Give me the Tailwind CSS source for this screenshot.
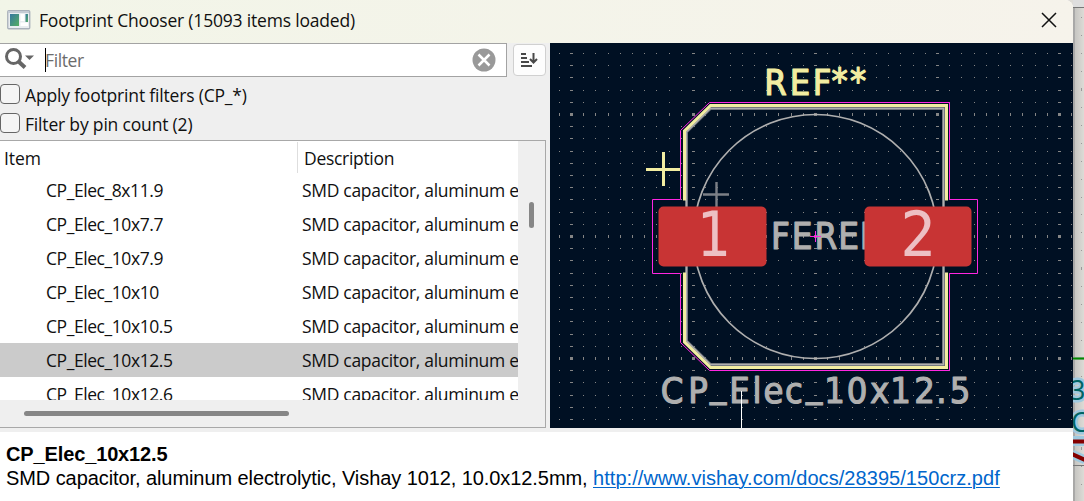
<!DOCTYPE html>
<html lang="en">
<head>
<meta charset="utf-8">
<title>Footprint Chooser</title>
<script src="https://cdn.jsdelivr.net/npm/@tailwindcss/browser@4"></script>
</head>
<body class="w-[1084px] h-[501px] overflow-hidden bg-[#dedcd7]">
<div class="flex w-[1084px] h-[501px] font-['Open_Sans',sans-serif] text-[17.5px] text-[#101010]">
  <div class="w-[1073px] h-[501px] shrink-0 flex flex-col overflow-hidden rounded-tr-lg bg-white">
    <header class="h-[43px] shrink-0 flex items-center pb-[3px] pl-[7px] pr-4 bg-gradient-to-r from-[#f2f5e8] to-[#f6f3eb]">
      <svg class="w-6 h-5 shrink-0" viewBox="0 0 24 20">
        <defs><linearGradient id="g" x1="0" y1="0" x2="1" y2="1"><stop offset="0" stop-color="#3577a0"/><stop offset="1" stop-color="#55ae62"/></linearGradient></defs>
        <rect x=".75" y=".75" width="22" height="18" rx="1" fill="#e9edf0" stroke="#a9b0ba" stroke-width="1.3"/>
        <path d="M1 2h21" stroke="#c4cbd4" stroke-width="2"/>
        <rect x="3" y="4" width="9" height="12" fill="url(#g)"/>
        <rect x="13.500" y="4" width="4" height="7" fill="#fff"/><rect x="18.500" y="4" width="2.500" height="8" fill="url(#g)"/><rect x="13.500" y="12.500" width="7.500" height="3.500" fill="#fff"/>
      </svg>
      <h1 class="ml-2 whitespace-nowrap -tracking-[0.19px]">Footprint Chooser (15093 items loaded)</h1>
      <svg class="ml-auto w-4 h-4" viewBox="0 0 16 16"><path d="M1 1l14 14M15 1L1 15" stroke="#111" stroke-width="1.500"/></svg>
    </header>
    <main class="flex h-[385px] shrink-0">
      <section class="w-[550px] h-[385px] shrink-0 bg-[#efefef] flex flex-col">
        <div class="flex h-[34px]">
          <div class="w-[507px] h-[34px] bg-white border border-l-0 border-[#a3a3a3] flex items-center">
            <svg class="ml-1 w-[32px] h-6 shrink-0 -mt-1" viewBox="0 0 32 24"><circle cx="9.500" cy="10.500" r="7" fill="none" stroke="#666" stroke-width="3"/><path d="M14 15l7 6.500" stroke="#666" stroke-width="4"/><path d="M21 9.500h9l-4.500 4.500z" fill="#666"/></svg>
            <div class="ml-[9px] h-6 border-l border-black flex items-center text-[#6c6c6c] -tracking-[0.4px]"><span class="-ml-px">Filter</span></div>
            <svg class="ml-auto mr-[10px] w-6 h-6 -mt-px" viewBox="0 0 24 24"><circle cx="12" cy="12" r="11.500" fill="#999"/><path d="M6.500 6.500l11 11M17.500 6.500l-11 11" stroke="#fff" stroke-width="2.500"/></svg>
          </div>
          <div class="ml-1.5 mt-px w-[33px] h-8 rounded border border-[#d0d0d0] bg-[#fdfdfd]">
            <svg class="w-[31px] h-[30px]" viewBox="0 0 31 30"><path d="M7 9h5M7 13h6M7 17h8M7 21h11" stroke="#484848" stroke-width="2"/><path d="M19.500 8v9M16 14l3.500 3.500L23 14" fill="none" stroke="#484848" stroke-width="2"/></svg>
          </div>
        </div>
        <div class="flex flex-col pt-1 h-[63px]">
          <label class="flex items-center h-[29px] gap-[5px]"><span class="w-5 h-5 -mt-1 rounded border border-[#666] bg-[#f5f5f5]"></span><span class="-tracking-[0.18px]">Apply footprint filters (CP_*)</span></label>
          <label class="flex items-center h-[29px] gap-[5px]"><span class="w-5 h-5 -mt-1 rounded border border-[#666] bg-[#f5f5f5]"></span><span class="-tracking-[0.18px]">Filter by pin count (2)</span></label>
        </div>
        <div class="w-[546px] h-[288px] border border-l-0 border-[#a8a8a8] flex flex-col">
          <div class="flex h-[260px] shrink-0">
            <div class="w-[518px] h-[259px] bg-white overflow-hidden whitespace-nowrap">
              <div class="flex h-[33px] pt-px"><div class="w-[298px] pl-1 pt-[3px] h-[31px] border-r border-[#dedede] -tracking-[0.1px]">Item</div><div class="pl-1.5 pt-[3px] -tracking-[0.3px]">Description</div></div>
              <div id="rows" class="-mt-px"></div>
            </div>
            <div class="flex-1 flex justify-center pt-[61px]"><div class="w-[5px] h-[26px] rounded-full bg-[#868686]"></div></div>
          </div>
          <div class="pl-6 pt-[10px]"><div class="w-[265px] h-[5px] rounded-full bg-[#868686]"></div></div>
        </div>
      </section>
      <svg class="w-[523px] h-[385px] shrink-0 bg-[#001023]" viewBox="550 43 523 385">
        <g id="grid" fill="#858585" shape-rendering="crispEdges"></g>
        <g fill="none">
          <path d="M710.500 108.500H943.500V364.500H710.500L686.500 341V132Z" stroke="#62676f" stroke-width="3"/>
          <path d="M710.500 108.500H943.500V364.500H710.500L686.500 341V132Z" stroke="#afafaf" stroke-width="1.500"/>
          <circle cx="815.500" cy="236.500" r="122" stroke="#afafaf" stroke-width="1.700"/>
          <path d="M703 194.500h26M716.500 182v26" stroke="#7c8087" stroke-width="2.400"/>
          <path d="M684.500 200.500V131L710.500 105.500H946.500V200.500M684.500 272.500V342L710.500 367.500H946.500V272.500" stroke="#f2eda1" stroke-width="3"/>
          <path d="M646 169.500h34M663.500 152v34" stroke="#f2eda1" stroke-width="3"/>
          <path d="M709.500 102.500H949.500V199.500H977.500V273.500H949.500V370.500H709.500L680.500 342.500V273.500H652.500V199.500H680.500V130.500Z" stroke="#ff26e2" stroke-width="1"/>
        </g>
        <g font-family="DejaVu Sans Condensed, DejaVu Sans" text-anchor="middle" stroke-linejoin="round">
          <text x="775.500 800 822 839.500 858" y="94.500 94.500 94.500 93 93" font-size="36" fill="#f2eda1" stroke="#f2eda1" stroke-width="1.200">REF**</text>
          <g fill="#afafaf" stroke="#afafaf" stroke-width="1.200">
            <text x="780.500 802 826 848.500 872" y="249" font-size="36.500">FEREN</text>
            <text x="672 698 718 739.500 757 773.500 794 814 834.500 857 879.500 900.500 924.500 941.500 960" y="403 403 397 403 403 403 403 397 403 403 403 403 403 403 403" font-size="36">CP_Elec_10x12.5</text>
          </g>
        </g>
        <path d="M810 236.500h11M815.500 231v11" stroke="#ff26e2"/>
        <path d="M741.500 391v37" stroke="#fff"/>
        <g fill="#c83434"><rect x="658.500" y="206.500" width="108" height="60" rx="5"/><rect x="864.500" y="206.500" width="107" height="60" rx="5"/></g>
        <g font-family="DejaVu Sans Mono" font-size="62" fill="#edc0c4" text-anchor="middle"><text transform="translate(713 256) scale(.9 1)">1</text><text transform="translate(918 256) scale(.95 1)">2</text></g>
      </svg>
    </main>
    <footer class="flex-1 border-t-4 border-[#efefef] bg-white pl-1.5 pt-[10px] font-['Liberation_Sans',sans-serif] text-[20px] leading-6 text-black whitespace-nowrap">
      <div class="font-bold -tracking-[0.13px]">CP_Elec_10x12.5</div>
      <div class="-tracking-[0.08px]">SMD capacitor, aluminum electrolytic, Vishay 1012, 10.0x12.5mm, <span class="tracking-[0.06px] text-[#0066cc] underline underline-offset-2 decoration-1">http://www.vishay.com/docs/28395/150crz.pdf</span></div>
    </footer>
  </div>
  <svg class="w-[11px] h-[501px] shrink-0" viewBox="1073 0 11 501">
    <defs><linearGradient id="s"><stop offset="0" stop-color="#a8a7a5"/><stop offset=".18" stop-color="#aaa"/><stop offset=".2" stop-color="#c7c6c2"/><stop offset="1" stop-color="#dddbd6"/></linearGradient></defs>
    <path d="M1073 0h11v501h-11z" fill="url(#s)"/>
    <path d="M1073 0h11v7h-11z" fill="#dedede"/><path d="M1073 7.500h11M1073 465.500h11" stroke="#777"/>
    <g id="dots" fill="#999"></g>
    <path d="M1073 358.500h11" stroke="#78a978" stroke-width="3"/><path d="M1073 358.500h11" stroke="#008a00" stroke-width="1.500"/>
    <g font-family="Open Sans" fill="#006464" stroke="#9fc9df" stroke-width="5" stroke-linejoin="round" paint-order="stroke" font-size="27"><text x="1070" y="400">3</text><text x="1071" y="432">C</text></g>
    <path d="M1073 436h11v10h-11z" fill="#9fc9df"/><path d="M1073 441.500h11" stroke="#840000" stroke-width="4"/>
    <path d="M1072 454l13 6" stroke="#9fc9df" stroke-width="9"/><path d="M1072 454l13 6" stroke="#840000" stroke-width="4"/>
  </svg>
</div>
<script>
const items = ['8x11.9', '10x7.7', '10x7.9', '10x10', '10x10.5', '10x12.5', '10x12.6'];
document.getElementById('rows').innerHTML = items.map(n =>
  `<div class="flex h-[34px] items-center ${n === '10x12.5' ? 'bg-[#cbcbcb]' : ''}"><div class="w-[302px] shrink-0 pl-[46px] -tracking-[0.43px]">CP_Elec_${n}</div><div class="-tracking-[0.31px]">SMD capacitor, aluminum electrolytic</div></div>`).join('');
let grid = '';
for (let i = -21; i <= 21; i++) for (let j = -15; j <= 15; j++) {
  const mx = i % 10 === 0, my = j % 10 === 0, x = Math.round(815 + 12.2 * i), y = Math.round(236 + 12.2 * j);
  grid += `<rect x="${mx ? x - 1 : x}" y="${my ? y - 1 : y}" width="${mx ? 3 : 1}" height="${my ? 3 : 1}"/>`;
}
document.getElementById('grid').innerHTML = grid;
let dots = '';
for (let k = 0; k < 27; k++) dots += `<rect x="1081" y="${Math.round(17 + 17.95 * k) - (k % 10 === 4 ? 1 : 0)}" width="1" height="${k % 10 === 4 ? 3 : 1}"/>`;
document.getElementById('dots').innerHTML = dots;
</script>
</body>
</html>
